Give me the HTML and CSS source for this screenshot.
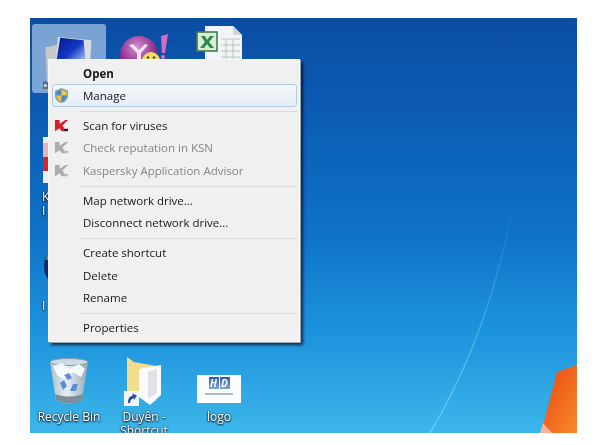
FILE: index.html
```html
<!DOCTYPE html>
<html lang="en">
<head>
<meta charset="utf-8">
<title>Desktop context menu</title>
<link rel="stylesheet" href="styles.css">
</head>
<body>
<main class="desktop">
  <svg class="wallpaper" viewBox="0 0 547 415" aria-hidden="true">
    <defs>
      <linearGradient id="streak" x1="0" y1="1" x2="0" y2="0">
        <stop offset="0" stop-color="#8fdcf5" stop-opacity=".55"/>
        <stop offset=".5" stop-color="#8fdcf5" stop-opacity=".3"/>
        <stop offset="1" stop-color="#8fdcf5" stop-opacity="0"/>
      </linearGradient>
      <linearGradient id="flag" x1="0" y1="0" x2="1" y2="1">
        <stop offset="0" stop-color="#e8440f"/>
        <stop offset="1" stop-color="#f88a2c"/>
      </linearGradient>
    </defs>
    <path d="M400 415C430 365 465 290 484 180" fill="none" stroke="url(#streak)" stroke-width="1.5"/>
    <path d="M527 354L547 347V415H511Z" fill="url(#flag)"/>
    <path d="M513 405L522 415H510Z" fill="#f2b79a"/>
  </svg>

  <div class="selection"></div>

  <svg class="icon icon-computer" viewBox="0 0 64 68" aria-hidden="true">
    <defs>
      <linearGradient id="screen" x1="0" y1="0" x2="1" y2="1">
        <stop offset="0" stop-color="#06188c"/>
        <stop offset=".5" stop-color="#1238c4"/>
        <stop offset="1" stop-color="#e4eafb"/>
      </linearGradient>
    </defs>
    <circle cx="3" cy="64" r="5.500" fill="#5d6c7c"/><circle cx="3" cy="64" r="2" fill="#d7dde2"/>
    <path d="M3 15L19 12V56L5 60Z" fill="#c6c9ca"/>
    <path d="M19 2L62 6L60 40L16 40Z" fill="#d9dee6"/>
    <path d="M22 3L52 6L55 40H16Z" fill="url(#screen)"/>
  </svg>

  <svg class="icon icon-yahoo" viewBox="0 0 50 26" aria-hidden="true">
    <defs>
      <radialGradient id="ball" cx=".45" cy=".3" r=".8">
        <stop offset="0" stop-color="#d58fd0"/><stop offset=".6" stop-color="#8f2b8d"/><stop offset="1" stop-color="#4e1250"/>
      </radialGradient>
    </defs>
    <ellipse cx="19" cy="22" rx="19" ry="19" fill="url(#ball)"/>
    <path d="M9 12L13 11L19 17L25 11L28 12L21 20V26H17V20Z" fill="#f3e3ef"/>
    <ellipse cx="31" cy="28" rx="9" ry="9" fill="#f3dc6a"/>
    <circle cx="28" cy="24.500" r="1.300" fill="#55502a"/><circle cx="34" cy="24.500" r="1.300" fill="#55502a"/>
    <path d="M41 3L48 1L45 20L42 20Z" fill="#d86bc4"/>
    <circle cx="43" cy="24" r="2" fill="#d86bc4"/>
  </svg>

  <svg class="icon icon-excel" viewBox="0 0 48 36" aria-hidden="true">
    <path d="M9 1H37L46 10V36H9Z" fill="#f2f5f7"/>
    <path d="M37 1V10H46Z" fill="#cdd6dd"/>
    <path d="M25 14H44M25 20H44M25 26H44M25 32H44M30 14V36M37 14V36" stroke="#b7c6bf" stroke-width="1" fill="none"/>
    <rect x="1" y="7" width="20" height="19" fill="#dcebd5" stroke="#3f7d4b" stroke-width="1.600"/>
    <path d="M5 11H9L11 15L14 11H18L13 17L18 23H14L11 19L8 23H4L9 17Z" fill="#25894a"/>
  </svg>

  <svg class="icon icon-kaspersky" viewBox="0 0 5 46" aria-hidden="true">
    <rect width="5" height="46" fill="#eceef1"/>
    <rect y="20" width="5" height="14" fill="#d7262b"/>
    <rect y="6" width="5" height="14" fill="#e9b4b5"/>
  </svg>
  <svg class="icon icon-ball" viewBox="0 0 4 26" aria-hidden="true">
    <path d="M4 0C1 4 0 9 0 13C0 18 1 22 4 26Z" fill="#0d2c6b"/>
    <path d="M4 0C3 2 2 4 2 7H4Z" fill="#44a64a"/>
  </svg>

  <p class="label label-stub label-k1">K</p>
  <p class="label label-stub label-k2">I</p>
  <p class="label label-stub label-i">I</p>

  <div class="shortcut shortcut-bin">
    <svg class="art-bin" viewBox="0 0 40 50" aria-hidden="true">
      <defs>
        <linearGradient id="bin" x1="0" x2="1" y1="0" y2="0">
          <stop offset="0" stop-color="#aebfca"/><stop offset=".45" stop-color="#e6eef4"/><stop offset="1" stop-color="#94a8b5"/>
        </linearGradient>
      </defs>
      <path d="M1 5L7 43Q20 50 33 43L39 5Q20 -1 1 5Z" fill="url(#bin)"/>
      <ellipse cx="20" cy="5" rx="19" ry="3.500" fill="#cfdbe3" stroke="#8a9ba6"/>
      <path d="M4 9L13 6L20 12L30 7L36 12L32 20L24 15L15 22L8 18Z" fill="#f6f9fb"/>
      <path d="M15 18L20 16L23 21L19 23ZM11 26L15 23L18 29L14 33ZM24 27L29 27L27 34L21 34Z" fill="#5b8ed4"/>
      <path d="M7 43Q20 50 33 43L34 37Q20 42 6 37Z" fill="#7b8d98"/>
    </svg>
    <p class="label">Recycle Bin</p>
  </div>

  <div class="shortcut shortcut-folder">
    <svg class="art-folder" viewBox="0 0 40 50" aria-hidden="true">
      <path d="M3 0L10 5L32 9V44L3 36Z" fill="#f4dc8e"/>
      <path d="M15 12L37 8V38L26 48L15 40Z" fill="#fbfbfc"/>
      <path d="M24 15L33 12V36L24 42Z" fill="#dfe3e8"/>
      <rect x="0" y="34" width="15" height="15" fill="#f3f6f9"/>
      <path d="M4 46C4 41 6 39 9 38.500L8 36.500L13 38.500L10 43L9.500 41C7 42 6 44 6 46Z" fill="#1f4fa0"/>
    </svg>
    <p class="label">Duyên - Shortcut</p>
  </div>

  <div class="shortcut shortcut-logo">
    <div class="logo-card">
      <div class="logo-mark"><span class="logo-letter">H</span><span class="logo-letter">D</span></div>
      <div class="logo-bar"></div>
    </div>
    <p class="label">logo</p>
  </div>

  <nav class="menu">
    <div class="row row-strong"><span class="row-icon"></span>Open</div>
    <div class="row row-hover">
      <span class="row-icon">
        <svg class="glyph" viewBox="0 0 16 16" aria-hidden="true">
          <path d="M8 0L15 3V8C15 12 12 15 8 16C4 15 1 12 1 8V3Z" fill="#8d9ba8"/>
          <path d="M8 2V8H2.500V4Z" fill="#4b86c9"/>
          <path d="M8 2L13.500 4V8H8Z" fill="#eccb3c"/>
          <path d="M2.500 8H8V14.500C5 13.500 3 11 2.500 8Z" fill="#e9c63a"/>
          <path d="M8 8H13.500C13 11 11 13.500 8 14.500Z" fill="#4b86c9"/>
        </svg>
      </span>Manage
    </div>
    <div class="sep"></div>
    <div class="row">
      <span class="row-icon">
        <svg class="glyph" viewBox="0 0 16 16" aria-hidden="true">
          <path d="M1 2H6V6L12 2H15L9 8L13 14H8L6 11L1 14Z" fill="#d4202c"/>
          <rect x="11" y="11.500" width="4" height="2.500" fill="#222"/>
        </svg>
      </span>Scan for viruses
    </div>
    <div class="row row-off">
      <span class="row-icon">
        <svg class="glyph" viewBox="0 0 16 16" aria-hidden="true">
          <path d="M1 2H6V6L12 2H15L9 8L13 14H8L6 11L1 14Z" fill="#a9adb0"/>
          <rect x="11" y="11.500" width="4" height="2.500" fill="#b5bdc2"/>
        </svg>
      </span>Check reputation in KSN
    </div>
    <div class="row row-off">
      <span class="row-icon">
        <svg class="glyph" viewBox="0 0 16 16" aria-hidden="true">
          <path d="M1 2H6V6L12 2H15L9 8L13 14H8L6 11L1 14Z" fill="#a9adb0"/>
          <rect x="11" y="11.500" width="4" height="2.500" fill="#b5bdc2"/>
        </svg>
      </span>Kaspersky Application Advisor
    </div>
    <div class="sep"></div>
    <div class="row"><span class="row-icon"></span>Map network drive...</div>
    <div class="row"><span class="row-icon"></span>Disconnect network drive...</div>
    <div class="sep"></div>
    <div class="row"><span class="row-icon"></span>Create shortcut</div>
    <div class="row"><span class="row-icon"></span>Delete</div>
    <div class="row"><span class="row-icon"></span>Rename</div>
    <div class="sep"></div>
    <div class="row"><span class="row-icon"></span>Properties</div>
  </nav>
</main>
</body>
</html>
```

FILE: styles.css
```css
* { box-sizing: border-box; }

html, body { margin: 0; padding: 0; background: #fff; }

body { width: 600px; height: 445px; overflow: hidden; padding: 18px 0 0 30px; }

.desktop {
  position: relative;
  width: 547px;
  height: 415px;
  overflow: hidden;
  font-family: "Open Sans", "Noto Sans", sans-serif;
  background: linear-gradient(180deg, #0b4da3 0%, #0b5db5 25%, #0f72c8 52%, #1c92dc 75%, #3cb6ea 100%);
  filter: blur(0.35px);
}

.wallpaper { position: absolute; inset: 0; width: 547px; height: 415px; }

.selection {
  position: absolute;
  left: 2px;
  top: 6px;
  width: 74px;
  height: 69px;
  border-radius: 3px;
  background: rgba(190, 215, 240, .62);
}

.icon { position: absolute; display: block; }
.icon-computer { left: 13px; top: 17px; width: 50px; height: 54px; }
.icon-yahoo { left: 90px; top: 15px; width: 50px; height: 26px; }
.icon-excel { left: 166px; top: 7px; width: 48px; height: 36px; }
.icon-kaspersky { left: 13px; top: 119px; width: 5px; height: 46px; }
.icon-ball { left: 14px; top: 235px; width: 4px; height: 26px; }

.label {
  margin: 0;
  color: #fff;
  font-size: 12px;
  line-height: 14px;
  text-shadow: 0 1px 2px #000, 0 0 2px rgba(0, 0, 0, .8);
}

.label-stub { position: absolute; left: 12px; line-height: 12px; }
.label-k1 { top: 173px; }
.label-k2 { top: 187px; }
.label-i { top: 282px; }

.shortcut {
  position: absolute;
  display: flex;
  flex-direction: column;
  align-items: center;
  width: 76px;
  text-align: center;
}

.shortcut-bin { left: 1px; top: 339px; }
.shortcut-folder { left: 76px; top: 339px; }
.shortcut-logo { left: 151px; top: 339px; }

.art-bin, .art-folder { display: block; width: 40px; height: 50px; }
.art-bin + .label, .art-folder + .label { margin-top: 3px; }
.shortcut-folder .label { width: 62px; }
.shortcut-logo .label { margin-top: 7px; }

.logo-card {
  display: flex;
  flex-direction: column;
  align-items: center;
  width: 44px;
  height: 28px;
  margin-top: 18px;
  padding-top: 2px;
  background: #fbfcfd;
}

.logo-mark { display: flex; gap: 1px; }

.logo-letter {
  width: 10px;
  height: 12px;
  background: linear-gradient(180deg, #2e5ea8, #7fa3d6);
  color: #fff;
  font-size: 10px;
  line-height: 12px;
  font-weight: 700;
  font-style: italic;
  text-align: center;
}

.logo-bar {
  width: 28px;
  height: 2px;
  margin-top: 4px;
  background: #a9b8cb;
}

.menu {
  position: absolute;
  left: 18px;
  top: 41px;
  width: 252px;
  height: 283px;
  padding: 2px 2px 3px 3px;
  background: #f0f0f0;
  border: 1px solid #f8f8f8;
  box-shadow: 1px 1px 0 #9aa4ad, 3px 3px 3px rgba(0, 10, 40, .75);
  color: #161616;
  font-size: 11.5px;
}

.row {
  display: flex;
  align-items: center;
  height: 22.4px;
  white-space: nowrap;
}

.row-strong { font-weight: 700; }

.row-off { color: #858585; }

.row-hover {
  border: 1px solid #aecbe6;
  border-radius: 3px;
  background: linear-gradient(180deg, #f4f7fb, #e6edf6);
}

.row-icon {
  display: flex;
  flex: none;
  align-items: center;
  width: 31px;
  padding-left: 2px;
}

.row-hover .row-icon { width: 30px; padding-left: 1px; }

.glyph { display: block; width: 15px; height: 15px; }

.sep {
  height: 1px;
  margin: 4px 0 2.6px 28px;
  background: #d8d8d8;
}
```
